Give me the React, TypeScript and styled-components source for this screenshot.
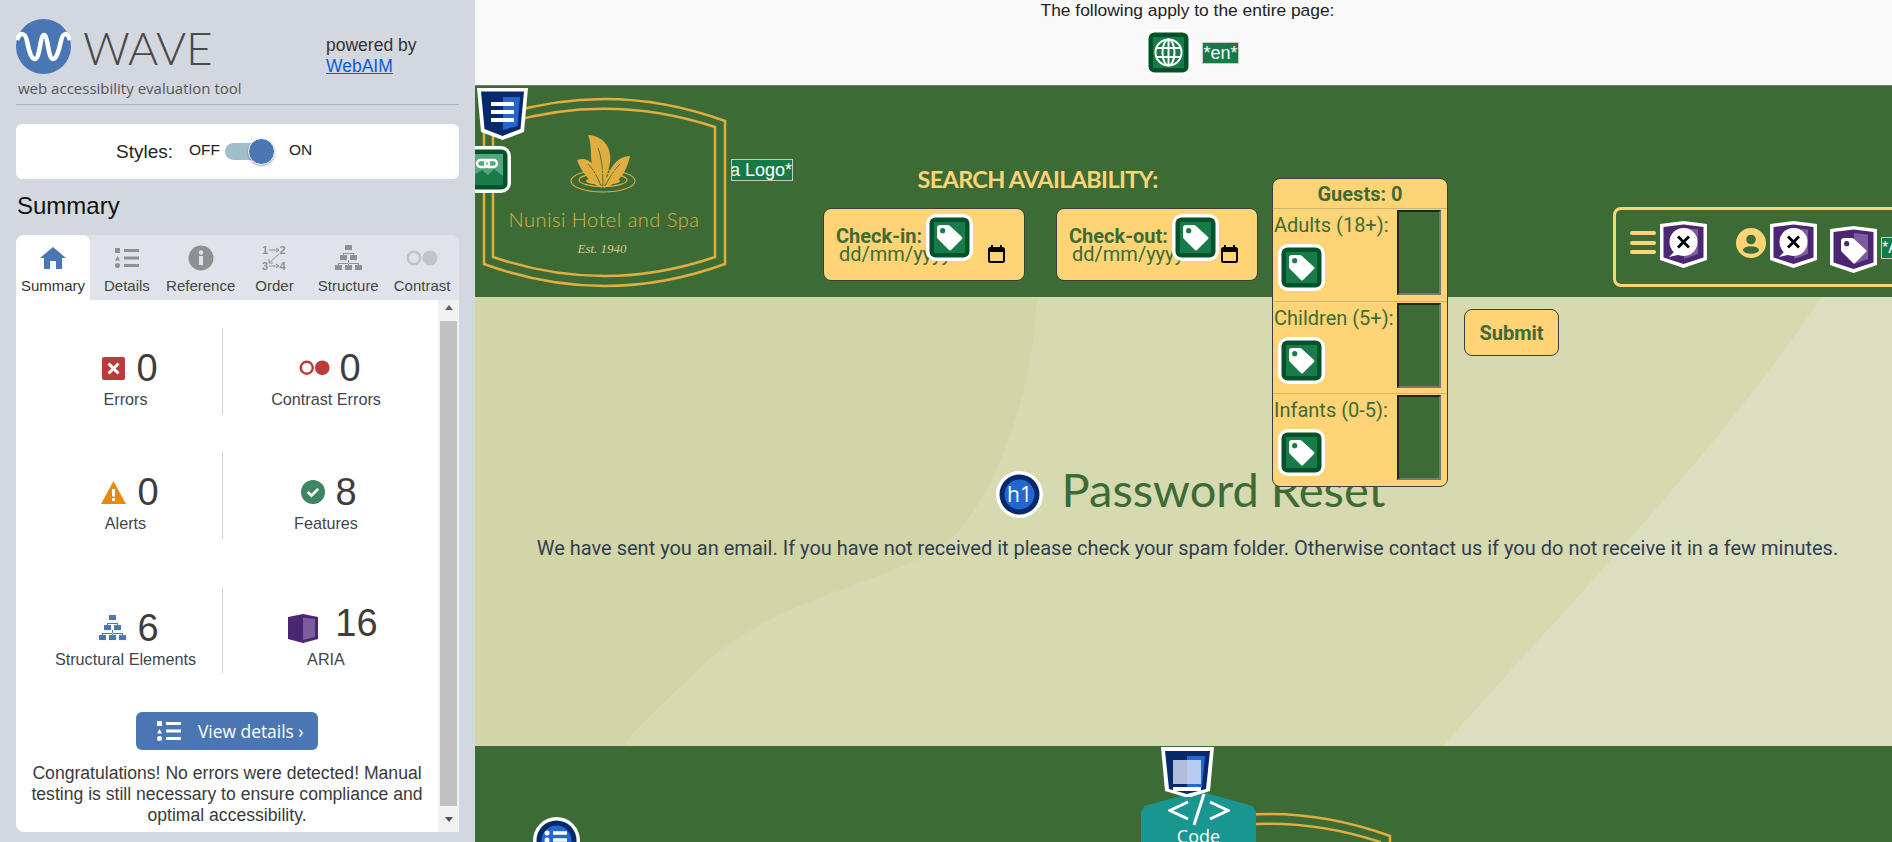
import React from 'react';
import styled, { createGlobalStyle } from 'styled-components';

const Global = createGlobalStyle`
  html, body { margin: 0; padding: 0; height: 100%; overflow: hidden; background: #d3d8e0; }
  * { box-sizing: border-box; }
`;

const Shell = styled.div`
  display: flex; width: 1892px; height: 842px; overflow: hidden;
  font-family: "Liberation Sans", Arial, sans-serif;
`;

/* ---------- sidebar ---------- */
const Sidebar = styled.aside`
  width: 475px; flex: none; height: 842px; background: #d3d8e0; padding: 19px 16px 0;
  display: flex; flex-direction: column;
`;
const Brand = styled.div`
  display: flex; height: 86px; border-bottom: 1px solid #aeb2b8; position: relative; flex: none;
`;
const BrandLeft = styled.div` width: 310px; `;
const BrandTop = styled.div` display: flex; align-items: center; gap: 12px; height: 55px; `;
const WaveWord = styled.span`
  font-family: Lato, sans-serif; font-weight: 300; font-size: 46px; line-height: 55px; color: #4a4a4a; padding-top: 2px;
`;
const Tagline = styled.div`
  font-family: "Open Sans", sans-serif; font-size: 15px; line-height: 20px; color: #555; margin: 4px 0 0 2px; white-space: nowrap;
`;
const Powered = styled.div`
  font-size: 17.5px; line-height: 21px; color: #333; padding-top: 16px;
  a { color: #0f5bd3; display: block; }
`;
const StylesCard = styled.div`
  margin-top: 19px; height: 55px; border-radius: 6px; background: #fff; flex: none;
  display: flex; align-items: center; padding: 0 0 4px 100px; color: #222;
`;
const StylesLabel = styled.span` font-size: 19px; width: 73px; padding-top: 4px; `;
const Small = styled.span` font-size: 15.5px; `;
const Track = styled.span`
  width: 44px; height: 17px; border-radius: 9px; background: #9fc0cb; margin: 4px 20px 0 5px; position: relative; display: block;
`;
const Knob = styled.span`
  position: absolute; right: -6px; top: -5px; width: 27px; height: 27px; border-radius: 50%;
  background: #4a77b4; border: 1px solid #fff; box-shadow: 0 1px 2px rgba(0,0,0,.35);
`;
const SummaryTitle = styled.h2`
  margin: 0; font-weight: 400; font-size: 24px; line-height: 28px; color: #111; padding: 13px 0 0 1px; height: 56px; flex: none;
`;
const Tabs = styled.div`
  display: grid; grid-template-columns: 74px repeat(5, 1fr); height: 65px; background: #e0e4ea; border-radius: 8px 8px 0 0; flex: none;
`;
const Tab = styled.div<{ $active?: boolean }>`
  display: flex; flex-direction: column; align-items: center; padding-top: 9px; font-size: 15px; height: 65px; white-space: nowrap;
  background: ${p => (p.$active ? '#fff' : 'transparent')};
  border-radius: ${p => (p.$active ? '8px 8px 0 0' : '0')};
  color: ${p => (p.$active ? '#333' : '#444')};
`;
const TabIcon = styled.div` height: 28px; display: flex; align-items: center; margin-bottom: 5px; `;
const Panel = styled.div`
  height: 532px; background: #fff; border-radius: 0 0 0 8px; display: flex; flex: none;
`;
const PanelBody = styled.div` flex: 1; padding-top: 28px; `;
const StatRow = styled.div<{ $top?: number }>`
  display: grid; grid-template-columns: 194px 1fr; padding-left: 13px; margin-top: ${p => p.$top || 0}px;
`;
const Stat = styled.div<{ $div?: boolean; $h: number }>`
  height: ${p => p.$h}px; display: flex; flex-direction: column; align-items: center;
  ${p => (p.$div ? 'border-right: 1px solid #cfd2d5;' : 'padding-right: 9px;')}
`;
const StatTop = styled.div<{ $shift?: number; $gap?: number }>`
  display: flex; align-items: center; justify-content: center; height: 46px; margin-top: 17px; gap: ${p => p.$gap ?? 11}px; padding-left: ${p => p.$shift ?? 9}px;
`;
const Num = styled.span<{ $raise?: number }>`
  font-size: 38px; line-height: 40px; color: #3d3d3d; position: relative; top: ${p => -(p.$raise || 0)}px;
`;
const StatLabel = styled.div` font-size: 16.2px; line-height: 18px; color: #3f4650; white-space: nowrap; margin-top: -1px; `;
const ViewBtn = styled.div`
  margin: 39px 0 0 120px; width: 182px; height: 38px; background: #4a77b4; border-radius: 6px; color: #fff;
  display: flex; align-items: center; gap: 17px; padding-left: 21px; font-family: "Open Sans", sans-serif; font-size: 17.4px;
`;
const Congrats = styled.p`
  margin: 13px 0 0; padding: 0 10px; text-align: center; font-size: 17.6px; line-height: 20.9px; color: #3a3a3a;
`;
const Scroll = styled.div`
  width: 21px; flex: none; background: #f1f1f1; display: flex; flex-direction: column; align-items: center; padding-top: 3px;
`;
const ArrowUp = styled.div` width: 0; height: 0; border: 4.5px solid transparent; border-top: 0; border-bottom: 5px solid #606060; margin-top: 2px; `;
const Thumb = styled.div` width: 17px; height: 485px; background: #c1c1c1; margin-top: 11px; `;
const ArrowDown = styled.div` width: 0; height: 0; border: 4.5px solid transparent; border-bottom: 0; border-top: 5px solid #505050; margin-top: 11px; `;

/* ---------- page ---------- */
const Main = styled.main` width: 1417px; flex: none; height: 842px; position: relative; overflow: hidden; display: flex; flex-direction: column; `;
const TopStrip = styled.div`
  height: 86px; flex: none; background: #f9f9f9; border-bottom: 1px solid #6f7f6c; padding-left: 8px;
  display: flex; flex-direction: column; align-items: center; color: #222; font-size: 17.4px; line-height: 20px;
`;
const ApplyRow = styled.div` display: flex; align-items: center; gap: 10px; margin: 9px 0 0 9px; line-height: 0; `;
const AltBadge = styled.span`
  background: #167a48; border: 1px solid #c8c8c8; color: #fff; font-size: 18px; line-height: 20px; display: inline-flex; justify-content: flex-end; overflow: hidden; white-space: nowrap;
`;
const Header = styled.header`
  height: 211px; flex: none; background: #3c6b35; display: flex; align-items: flex-start; position: relative; z-index: 2;
  padding: 10px 0 0 7px;
`;
const Over = styled.div<{ $x: number; $y: number; $z?: number }>`
  position: absolute; left: ${p => p.$x}px; top: ${p => p.$y}px; z-index: ${p => p.$z || 5}; line-height: 0;
`;
const LogoBadge = styled(AltBadge)` width: 62px; height: 22px; line-height: 20px; `;
const SearchForm = styled.form` display: flex; align-items: flex-start; margin-left: 96px; flex: none; margin-top: 0; `;
const SearchLeft = styled.div` width: 435px; padding-top: 69px; `;
const SearchHead = styled.div`
  font-family: Lato, sans-serif; font-weight: 700; font-size: 23.5px; line-height: 28px; color: #fed477; text-align: center; padding-right: 6px; white-space: nowrap; letter-spacing: -0.7px;
`;
const Fields = styled.div` display: flex; justify-content: space-between; margin-top: 15px; `;
const Field = styled.div`
  width: 202px; height: 73px; background: #fed477; border: 1px solid #3a3f3a; border-radius: 8px; padding: 16px 0 0 12px; position: relative;
  font-family: Roboto, sans-serif; color: #3c6b35; font-size: 20px;
`;
const FieldLabel = styled.div` font-weight: 700; font-size: 20px; line-height: 22px; `;
const DateText = styled.div` line-height: 21px; margin: -3px 0 0 3px; font-size: 20px; `;
const CalIcon = styled.div` position: absolute; right: 19px; top: 36px; line-height: 0; `;
const Guests = styled.div`
  width: 176px; height: 309px; margin: 82px 0 0 14px; background: #fed477; border: 1px solid #3a3f3a; border-radius: 8px; flex: none;
  font-family: Roboto, sans-serif; color: #3c6b35; display: flex; flex-direction: column; position: relative; z-index: 6;
`;
const GuestHead = styled.div`
  height: 30px; font-weight: 700; font-size: 20px; line-height: 30px; text-align: center; border-bottom: 1px solid #c9b777; flex: none;
`;
const GuestRow = styled.div<{ $last?: boolean }>`
  flex: 1; display: flex; justify-content: space-between; padding: 1px 6px 0 1px; ${p => (p.$last ? '' : 'border-bottom: 1px solid #c9b777;')}
`;
const GuestLabel = styled.div` font-size: 20px; line-height: 24px; padding-top: 3px; white-space: nowrap; `;
const GuestIcon = styled.div` margin: 7px 0 0 4px; line-height: 0; `;
const NumInput = styled.div`
  width: 44px; height: 85px; background: #3c6b35; border: 2px solid; border-color: #222 #777 #777 #222; flex: none;
`;
const Submit = styled.div`
  width: 95px; height: 47px; margin: 213px 0 0 16px; background: #fed477; border: 1px solid #3a3f3a; border-radius: 8px; flex: none;
  font-family: Roboto, sans-serif; font-weight: 700; font-size: 20px; color: #3c6b35; display: flex; align-items: center; justify-content: center;
`;
const Nav = styled.nav`
  margin: 111px 0 0 54px; width: 320px; height: 80px; border: 3px solid #fed477; border-radius: 8px; flex: none;
  display: flex; align-items: flex-start; padding: 11px 0 0 14px;
`;
const Bars = styled.div`
  width: 26px; height: 23px; margin: 10px 4px 0 0; display: flex; flex-direction: column; justify-content: space-between;
  span { display: block; height: 4px; border-radius: 2px; background: #fed477; }
`;
const UserWrap = styled.div` margin: 7px 4px 0 29px; line-height: 0; `;
const ShieldDrop = styled.div` margin: 5px 4px 0 13px; line-height: 0; `;
const NavBadge = styled(AltBadge)` width: 30px; height: 22px; margin-top: 16px; justify-content: flex-start; font-size: 16px; `;
const Content = styled.section`
  height: 449px; flex: none; background: #d7d9b1; position: relative; display: flex; flex-direction: column; align-items: center; padding: 168px 0 0 8px;
`;
const Backdrop = styled.svg` position: absolute; left: 0; top: 0; `;
const TitleRow = styled.div` display: flex; align-items: center; gap: 19px; position: relative; height: 48px; margin-left: 6px; `;
const TitleIcon = styled.div` line-height: 0; position: relative; top: 5px; `;
const Title = styled.h1`
  margin: 0; font-family: Lato, sans-serif; font-weight: 400; font-size: 47px; line-height: 48px; color: #3c6b35; white-space: nowrap;
`;
const Message = styled.p`
  margin: 22px 0 0; font-family: Roboto, sans-serif; font-size: 20px; line-height: 26px; color: #2f3f4f; position: relative; white-space: nowrap;
`;
const Footer = styled.footer` flex: 1; background: #3c6b35; position: relative; padding: 65px 0 0 672px; overflow: hidden; `;
const CodeBadge = styled.div`
  position: absolute; left: 666px; top: 45px; width: 115px; height: 100px; background: #1a9690; color: #fff; text-align: center;
  clip-path: polygon(50% 0, 97% 15%, 100% 21%, 100% 100%, 0 100%, 0 21%, 3% 15%);
  font-family: "Open Sans", sans-serif; font-size: 18px; line-height: 20px; padding-top: 3px;
`;
const CodeGlyph = styled.svg` display: block; margin: 0 auto; `;

/* ---------- icons ---------- */
const TagPath = ({ hole }: { hole: string }) => (
  <>
    <path d="M14 11H22Q23 11 24 12L36 23Q37 24 36 25L25 36Q24 37 23 36L12 25Q11 24 11 23V14Q11 11 14 11Z" fill="#fff" />
    <circle cx="16.7" cy="16.7" r="2.6" fill={hole} />
  </>
);
const GreenFrame = ({ children, size = 47 }: { children: React.ReactNode; size?: number }) => (
  <svg width={size} height={size} viewBox="0 0 47 47">
    <rect width="47" height="47" rx="10" fill="#fff" />
    <rect x="3.500" y="3.500" width="40" height="40" rx="6" fill="#02532a" />
    <rect x="8" y="8" width="31" height="31" fill="#177b4a" />
    {children}
  </svg>
);
const TagIcon = () => <GreenFrame><TagPath hole="#177b4a" /></GreenFrame>;
const GlobeIcon = () => (
  <GreenFrame>
    <g fill="none" stroke="#fff" strokeWidth="2">
      <circle cx="23.500" cy="23.500" r="13" />
      <ellipse cx="23.500" cy="23.500" rx="6" ry="13" />
      <path d="M11 19H36M11 28H36" />
      <path d="M23.500 11V36" />
    </g>
  </GreenFrame>
);
const ShieldBase = ({ children }: { children: React.ReactNode }) => (
  <svg width="47" height="47" viewBox="0 0 47 47">
    <path d="M0 3L23.500 0L47 3V39L23.500 47L0 39Z" fill="#fff" />
    <path d="M3.500 6L23.500 3.500L43.500 6V36.500L23.500 43L3.500 36.500Z" fill="#4a2673" />
    <path d="M24 7L38 8.500V33L24 38Z" fill="#7d5c9e" />
    {children}
  </svg>
);
const BubbleShield = () => (
  <ShieldBase>
    <circle cx="23.500" cy="21" r="14" fill="#fff" />
    <path d="M15 30L9 36L22 33Z" fill="#fff" />
    <path d="M18 15.500L29 26.500M29 15.500L18 26.500" stroke="#000" strokeWidth="2.800" />
  </ShieldBase>
);
const TagShield = () => (
  <ShieldBase>
    <g transform="translate(0,1)"><TagPath hole="#4a2673" /></g>
  </ShieldBase>
);
const BlueShield = () => (
  <svg width="53" height="53" viewBox="0 0 53 53">
    <path d="M1 0H52L48 44L26.500 52L5 44Z" fill="#fff" />
    <path d="M5 3.500H48L44.500 41L26.500 48L8.500 41Z" fill="#06296b" />
    <path d="M27 9H44L41.500 38L27 42Z" fill="#2468cf" />
    <path d="M15 16H38M15 24H38M15 32H38" stroke="#fff" strokeWidth="4" />
  </svg>
);
const ImageLinkIcon = () => (
  <svg width="47" height="47" viewBox="0 0 47 47">
    <rect width="47" height="47" rx="10" fill="#fff" />
    <rect x="3.500" y="3.500" width="40" height="40" rx="6" fill="#02532a" />
    <rect x="8" y="8" width="31" height="31" fill="#57a57c" />
    <path d="M8 39V30L18 24L24 29L30 23L39 30V39Z" fill="#177b4a" />
    <g fill="none" stroke="#fff" strokeWidth="2.400">
      <rect x="13" y="14" width="12" height="7" rx="3.500" />
      <rect x="21" y="14" width="12" height="7" rx="3.500" />
    </g>
  </svg>
);
const H1Icon = () => (
  <svg width="47" height="47" viewBox="0 0 47 47">
    <circle cx="23.500" cy="23.500" r="23.500" fill="#fff" />
    <circle cx="23.500" cy="23.500" r="20" fill="#06296b" />
    <circle cx="23.500" cy="23.500" r="15" fill="#2468cf" />
    <text x="23.500" y="31" textAnchor="middle" fontFamily="Open Sans, sans-serif" fontSize="21" fill="#fff">h1</text>
  </svg>
);
const PhoneShield = () => (
  <svg width="53" height="50" viewBox="0 0 53 50">
    <path d="M0 0H53L49 44L30 50H24L4 44Z" fill="#fff" />
    <path d="M4 4H49L45 42L26 47L8 42Z" fill="#06296b" />
    <path d="M26 9H44L41 40L26 44Z" fill="#2468cf" />
    <rect x="12" y="13" width="28" height="24" fill="#dbe4f5" opacity=".8" />
    <rect x="12" y="40" width="28" height="4" fill="#fff" />
  </svg>
);
const ListCircle = () => (
  <svg width="47" height="47" viewBox="0 0 47 47">
    <circle cx="23.500" cy="23.500" r="23.500" fill="#fff" />
    <circle cx="23.500" cy="23.500" r="20" fill="#06296b" />
    <circle cx="23.500" cy="23.500" r="15" fill="#2468cf" />
    <path d="M20 16H34M20 23H34M20 30H34" stroke="#fff" strokeWidth="3.500" />
    <circle cx="14" cy="16" r="2.500" fill="#fff" /><circle cx="14" cy="23" r="2.500" fill="#fff" /><circle cx="14" cy="30" r="2.500" fill="#fff" />
  </svg>
);
const Logo = () => (
  <svg width="245" height="192" viewBox="0 0 245 192" style={{ flex: 'none', display: 'block' }}>
    <g fill="none" stroke="#dfae3f" strokeWidth="2.500">
      <path d="M2 25Q122 -19 243 25V168Q122 212 2 168Z" />
      <path d="M11 31Q122 -5.600 233 31V161Q122 199 11 161Z" />
    </g>
    <g fill="#dfae3f">
      <path d="M106 39C124 40 134 56 125 78C123 84 122 88 122 92C118 84 112 78 110 68C108 58 110 48 106 39Z" />
      <path d="M95 64C106 60 116 68 120 92C110 88 100 78 95 64Z" />
      <path d="M148 60C134 60 126 74 122 92C136 88 144 78 148 60Z" />
      <ellipse cx="121" cy="85" rx="17" ry="3.800" />
    </g>
    <g fill="none" stroke="#3c6b35" strokeWidth="0.900">
      <path d="M116 52C120 62 121 76 121 92M106 68C112 74 116 82 119 90M138 68C132 74 127 82 123 90" />
    </g>
    <g fill="none" stroke="#dfae3f" strokeWidth="1.100">
      <ellipse cx="121" cy="84" rx="24" ry="6.500" />
      <ellipse cx="121" cy="85" rx="32" ry="11" />
    </g>
    <text x="122" y="131" textAnchor="middle" fontFamily="Lato, sans-serif" fontWeight="300" fontSize="20" letterSpacing="0.5" fill="#dfae3f">Nunisi Hotel and Spa</text>
    <text x="120" y="157" textAnchor="middle" fontFamily="Liberation Serif, serif" fontStyle="italic" fontSize="13" fill="#d4c98a">Est. 1940</text>
  </svg>
);
const WaveLogo = () => (
  <svg width="55" height="55" viewBox="0 0 55 55">
    <circle cx="27.500" cy="27.500" r="27.500" fill="#4a77b4" />
    <path d="M1 21C4 13 9 13 11 22C13 32 15 40 19 40C24 40 24 16 28 16C32 16 32 40 37 40C41 40 43 30 45 22C47 13 51 13 54 21" fill="none" stroke="#fff" strokeWidth="4.500" />
  </svg>
);
const G = '#8e9093';
const HomeI = () => (
  <svg width="26" height="22" viewBox="0 0 26 22"><path d="M13 0L26 11H22V22H16V14H10V22H4V11H0Z" fill="#4a77b4" /></svg>
);
const ListI = ({ c = G, w = 24 }: { c?: string; w?: number }) => (
  <svg width={w} height={w * 0.85} viewBox="0 0 24 20.400" fill={c}>
    <rect x="0" y="0" width="5" height="5" />
    <rect x="9" y="1" width="15" height="3" />
    <path d="M2.500 8L5 12.500H0Z" />
    <rect x="9" y="8.500" width="15" height="3" />
    <circle cx="2.500" cy="17.500" r="2.500" />
    <rect x="9" y="16" width="15" height="3" />
  </svg>
);
const InfoI = () => (
  <svg width="26" height="26" viewBox="0 0 26 26">
    <circle cx="13" cy="13" r="12.500" fill={G} />
    <rect x="11" y="11" width="4" height="9" fill="#e0e4ea" /><circle cx="13" cy="7.500" r="2.200" fill="#e0e4ea" />
  </svg>
);
const OrderI = () => (
  <svg width="24" height="26" viewBox="0 0 24 26" fontFamily="Liberation Sans, sans-serif" fontSize="11" fontWeight="700" fill={G}>
    <text x="0" y="9">1</text><text x="17.500" y="9">2</text>
    <text x="0" y="25">3</text><text x="17.500" y="25">4</text>
    <path d="M7 5H17M14 3L17 5L14 7M7 21H17M14 19L17 21L14 23M17 9L7 18M7 14V18H11" stroke={G} fill="none" strokeWidth="1" />
  </svg>
);
const TreeI = ({ c = G, s = 27 }: { c?: string; s?: number }) => (
  <svg width={s} height={s * 0.93} viewBox="0 0 27 25" fill={c}>
    <rect x="10" y="0" width="7" height="5" />
    <rect x="5" y="10" width="7" height="5" /><rect x="15" y="10" width="7" height="5" />
    <rect x="0" y="20" width="7" height="5" /><rect x="10" y="20" width="7" height="5" /><rect x="20" y="20" width="7" height="5" />
    <path d="M13 5V8M8 8H19V10H18V9H9V10H8ZM3 18H24V20H23V19H4V20H3ZM13 15V20H14V15Z" />
  </svg>
);
const ContrastI = ({ c = '#c0c3c7', w = 32 }: { c?: string; w?: number }) => (
  <svg width={w} height={w * 0.5} viewBox="0 0 32 16">
    <circle cx="8" cy="8" r="6.200" fill="none" stroke={c} strokeWidth="2.500" />
    <circle cx="24" cy="8" r="7.500" fill={c} />
  </svg>
);
const ErrI = () => (
  <svg width="23" height="23" viewBox="0 0 23 23">
    <rect width="23" height="23" rx="2" fill="#bb3a3a" />
    <path d="M6.500 6.500L16.500 16.500M16.500 6.500L6.500 16.500" stroke="#fff" strokeWidth="3" />
  </svg>
);
const AlertI = () => (
  <svg width="25" height="23" viewBox="0 0 25 23">
    <path d="M12.500 0L25 23H0Z" fill="#e78a11" />
    <rect x="11" y="8" width="3" height="7.500" fill="#fff" /><rect x="11" y="17" width="3" height="3" fill="#fff" />
  </svg>
);
const CheckI = () => (
  <svg width="24" height="24" viewBox="0 0 23 23">
    <circle cx="11.500" cy="11.500" r="11.500" fill="#3e8563" />
    <path d="M6.500 11.500L10 15L16.500 8.500" fill="none" stroke="#fff" strokeWidth="2.600" />
  </svg>
);
const AriaI = () => (
  <svg width="30" height="29" viewBox="0 0 30 29">
    <path d="M0 3L15 0L30 3V25L15 29L0 25Z" fill="#4a2673" />
    <path d="M15 3.500L27 5V23L15 26Z" fill="#7d5c9e" />
  </svg>
);
const CalendarI = () => (
  <svg width="17" height="18" viewBox="0 0 17 18">
    <path d="M4 0V3M13 0V3" stroke="#000" strokeWidth="2" />
    <rect x="1" y="3" width="15" height="14" rx="1.500" fill="none" stroke="#000" strokeWidth="2" />
    <rect x="1" y="3" width="15" height="4" fill="#000" />
  </svg>
);
const UserI = () => (
  <svg width="30" height="30" viewBox="0 0 30 30">
    <circle cx="15" cy="15" r="15" fill="#fed477" />
    <circle cx="15" cy="11.500" r="4.800" fill="#3c6b35" />
    <ellipse cx="15" cy="22" rx="8" ry="3.800" fill="#3c6b35" />
  </svg>
);

const DateField = ({ label, tagLeft }: { label: string; tagLeft: number }) => (
  <Field>
    <FieldLabel>{label}</FieldLabel>
    <DateText>dd/mm/yyyy</DateText>
    <CalIcon><CalendarI /></CalIcon>
    <Over $x={tagLeft} $y={5}><TagIcon /></Over>
  </Field>
);
const GuestLine = ({ label, last }: { label: string; last?: boolean }) => (
  <GuestRow $last={last}>
    <div>
      <GuestLabel>{label}</GuestLabel>
      <GuestIcon><TagIcon /></GuestIcon>
    </div>
    <NumInput />
  </GuestRow>
);

export default function App() {
  return (
    <Shell>
      <Global />
      <Sidebar>
        <Brand>
          <BrandLeft>
            <BrandTop>
              <WaveLogo />
              <WaveWord>WAVE</WaveWord>
            </BrandTop>
            <Tagline>web accessibility evaluation tool</Tagline>
          </BrandLeft>
          <Powered>powered by<a href="#webaim">WebAIM</a></Powered>
        </Brand>
        <StylesCard>
          <StylesLabel>Styles:</StylesLabel>
          <Small>OFF</Small>
          <Track><Knob /></Track>
          <Small>ON</Small>
        </StylesCard>
        <SummaryTitle>Summary</SummaryTitle>
        <Tabs>
          <Tab $active><TabIcon><HomeI /></TabIcon>Summary</Tab>
          <Tab><TabIcon><ListI /></TabIcon>Details</Tab>
          <Tab><TabIcon><InfoI /></TabIcon>Reference</Tab>
          <Tab><TabIcon><OrderI /></TabIcon>Order</Tab>
          <Tab><TabIcon><TreeI /></TabIcon>Structure</Tab>
          <Tab><TabIcon><ContrastI /></TabIcon>Contrast</Tab>
        </Tabs>
        <Panel>
          <PanelBody>
            <StatRow>
              <Stat $div $h={86}><StatTop><ErrI /><Num>0</Num></StatTop><StatLabel>Errors</StatLabel></Stat>
              <Stat $h={86}><StatTop $shift={8} $gap={9}><ContrastI c="#bb3a3a" w={31} /><Num>0</Num></StatTop><StatLabel>Contrast Errors</StatLabel></Stat>
            </StatRow>
            <StatRow $top={38}>
              <Stat $div $h={87}><StatTop><AlertI /><Num>0</Num></StatTop><StatLabel>Alerts</StatLabel></Stat>
              <Stat $h={87}><StatTop $shift={6} $gap={10}><CheckI /><Num>8</Num></StatTop><StatLabel>Features</StatLabel></Stat>
            </StatRow>
            <StatRow $top={49}>
              <Stat $div $h={85}><StatTop $shift={7}><TreeI c="#4a77b4" s={27} /><Num>6</Num></StatTop><StatLabel>Structural Elements</StatLabel></Stat>
              <Stat $h={85}><StatTop $shift={14} $gap={17}><AriaI /><Num $raise={5}>16</Num></StatTop><StatLabel>ARIA</StatLabel></Stat>
            </StatRow>
            <ViewBtn><ListI c="#fff" w={24} />View details ›</ViewBtn>
            <Congrats>Congratulations! No errors were detected! Manual testing is still necessary to ensure compliance and optimal accessibility.</Congrats>
          </PanelBody>
          <Scroll>
            <ArrowUp />
            <Thumb />
            <ArrowDown />
          </Scroll>
        </Panel>
      </Sidebar>

      <Main>
        <TopStrip>
          The following apply to the entire page:
          <ApplyRow>
            <GlobeIcon />
            <AltBadge>*en*</AltBadge>
          </ApplyRow>
        </TopStrip>
        <Header>
          <Logo />
          <Over $x={1} $y={2}><BlueShield /></Over>
          <Over $x={-11} $y={60}><ImageLinkIcon /></Over>
          <Over $x={256} $y={73}><LogoBadge>Nunisi Hotel and Spa Logo*</LogoBadge></Over>
          <SearchForm>
            <SearchLeft>
              <SearchHead>SEARCH AVAILABILITY:</SearchHead>
              <Fields>
                <DateField label="Check-in:" tagLeft={102} />
                <DateField label="Check-out:" tagLeft={115} />
              </Fields>
            </SearchLeft>
            <Guests>
              <GuestHead>Guests: 0</GuestHead>
              <GuestLine label="Adults (18+):" />
              <GuestLine label="Children (5+):" />
              <GuestLine label="Infants (0-5):" last />
            </Guests>
            <Submit>Submit</Submit>
          </SearchForm>
          <Nav>
            <Bars><span /><span /><span /></Bars>
            <BubbleShield />
            <UserWrap><UserI /></UserWrap>
            <BubbleShield />
            <ShieldDrop><TagShield /></ShieldDrop>
            <NavBadge>*A</NavBadge>
          </Nav>
        </Header>
        <Content>
          <Backdrop width="1417" height="449" viewBox="0 0 1417 449">
            <path d="M0 0H562C560 70 535 170 485 233C430 290 300 290 210 385C180 415 160 430 150 449H0Z" fill="#d2d5a6" />
            <path d="M1347 0H1417V449H968C1100 300 1230 170 1347 0Z" fill="#dcdfbf" />
          </Backdrop>
          <TitleRow>
            <TitleIcon><H1Icon /></TitleIcon>
            <Title>Password Reset</Title>
          </TitleRow>
          <Message>We have sent you an email. If you have not received it please check your spam folder. Otherwise contact us if you do not receive it in a few minutes.</Message>
        </Content>
        <Footer>
          <Logo />
          <Over $x={58} $y={71}><ListCircle /></Over>
          <Over $x={686} $y={1}><PhoneShield /></Over>
          <CodeBadge>
            <CodeGlyph width="62" height="32" viewBox="0 0 62 32">
              <path d="M20 8L2 16.500L20 25M42 8L60 16.500L42 25M36 0L26 31" fill="none" stroke="#fff" strokeWidth="3" />
            </CodeGlyph>
            <div>Code</div>
          </CodeBadge>
        </Footer>
      </Main>
    </Shell>
  );
}
